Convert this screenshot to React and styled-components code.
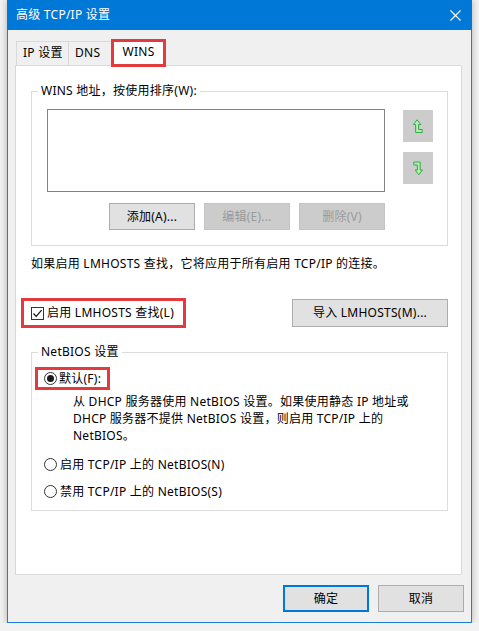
import React from "react";
import styled, { createGlobalStyle } from "styled-components";

const GlobalStyle = createGlobalStyle`
  html, body { margin: 0; padding: 0; background: #f2f2f2; }
  body {
    font-family: "Noto Sans", "Noto Sans CJK SC", sans-serif;
    font-size: 12px;
    letter-spacing: 0.25px;
    color: #000;
  }
  * { box-sizing: border-box; }
`;

const Window = styled.div`
  margin-left: 7px;
  width: 465px;
  border: 1px solid #1a7fd6;
  border-top: none;
  background: #f0f0f0;
  box-shadow: 0 0 7px rgba(0, 0, 0, 0.28);
`;

const TitleBar = styled.div`
  height: 30px;
  margin: 0 -1px;
  background: #0078d7;
  color: #fff;
  display: flex;
  align-items: center;
  justify-content: space-between;
  padding: 0 11px 0 9px;
  line-height: 16px;
`;

const Body = styled.div`
  padding: 0 7px 10px 7px;
`;

const TabRow = styled.div`
  display: flex;
  align-items: flex-end;
  height: 26px;
  margin-top: 9px;
  padding-left: 1px;
  position: relative;
  z-index: 1;
`;

const Tab = styled.div`
  width: ${(p) => p.$w}px;
  height: 24px;
  margin-left: ${(p) => (p.$first ? 0 : -1)}px;
  border: 1px solid #d9d9d9;
  border-bottom: none;
  background: #f0f0f0;
  padding-left: 6px;
  line-height: 22px;
  white-space: nowrap;
`;

const ActiveTab = styled.div`
  width: 55px;
  height: 28px;
  margin-left: -3px;
  margin-bottom: -2px;
  border: 3px solid #e33a3e;
  background: #fff;
  text-align: center;
  line-height: 20px;
  padding-bottom: 2px;
`;

const Panel = styled.div`
  height: 510px;
  margin-right: 2px;
  border: 1px solid #d9d9d9;
  background: #fff;
  padding: 0 13px 0 15px;
  overflow: hidden;
`;

const Group = styled.fieldset`
  margin: ${(p) => p.$top}px 0 0 0;
  padding: 0;
  min-width: 0;
  border: 1px solid #dcdcdc;
`;

const Legend = styled.legend`
  margin-left: 6px;
  padding: 0 3px;
  line-height: 16px;
`;

const GroupBody = styled.div`
  padding: ${(p) => p.$pad};
`;

const ListRow = styled.div`
  display: flex;
  gap: 18px;
`;

const ListBox = styled.div`
  width: 338px;
  height: 83px;
  border: 1px solid #828282;
  background: #fff;
`;

const ArrowCol = styled.div`
  display: flex;
  flex-direction: column;
  gap: 10px;
  padding-top: 1px;
`;

const ArrowButton = styled.div`
  width: 30px;
  height: 32px;
  background: #cccccc;
  display: flex;
  align-items: center;
  justify-content: center;
`;

const ButtonRow = styled.div`
  width: 338px;
  display: flex;
  justify-content: flex-end;
  gap: 9px;
  margin-top: 11px;
`;

const Button = styled.button`
  width: ${(p) => p.$w || 86}px;
  height: ${(p) => p.$h || 27}px;
  font: inherit;
  letter-spacing: inherit;
  line-height: 16px;
  padding: 0;
  color: ${(p) => (p.disabled ? "#9a9a9a" : "#000")};
  background: ${(p) => (p.disabled ? "#cccccc" : "#e1e1e1")};
  border: ${(p) =>
    p.$primary ? "2px solid #0078d7" : p.disabled ? "1px solid #c4c4c4" : "1px solid #adadad"};
  cursor: default;
`;

const InfoText = styled.div`
  margin-top: 10px;
  line-height: 16px;
  white-space: nowrap;
`;

const CheckRow = styled.div`
  display: flex;
  align-items: center;
  justify-content: space-between;
  margin: 26px 0 0 -10px;
  height: 30px;
`;

const Highlight = styled.div`
  display: inline-flex;
  align-items: center;
  gap: ${(p) => p.$gap}px;
  height: ${(p) => p.$h}px;
  border: 3px solid #e33a3e;
  padding: 0 ${(p) => p.$pr}px 0 ${(p) => p.$pl}px;
  margin-left: ${(p) => p.$ml || 0}px;
  margin-top: ${(p) => p.$mt || 0}px;
  line-height: 16px;
  white-space: nowrap;
`;

const CheckBox = styled.span`
  width: 13px;
  height: 13px;
  border: 1px solid #333;
  background: #fff;
  display: inline-flex;
  align-items: center;
  justify-content: center;
`;

const RadioCircle = styled.span`
  width: 13px;
  height: 13px;
  border-radius: 50%;
  border: 1px solid #333;
  background: #fff;
  display: inline-flex;
  align-items: center;
  justify-content: center;
  flex: none;
  &::after {
    content: "";
    width: 7px;
    height: 7px;
    border-radius: 50%;
    background: ${(p) => (p.$checked ? "#1a1a1a" : "transparent")};
  }
`;

const RadioRow = styled.div`
  display: flex;
  align-items: center;
  gap: 3px;
  height: 17px;
  margin-top: ${(p) => p.$mt}px;
  line-height: 16px;
  white-space: nowrap;
`;

const Description = styled.div`
  margin: 3px 0 0 29px;
  line-height: 17px;
  white-space: nowrap;
`;

const Footer = styled.div`
  display: flex;
  justify-content: flex-end;
  gap: 9px;
  margin-top: 10px;
`;

const CloseIcon = () => (
  <svg width="11" height="11" viewBox="0 0 11 11">
    <path d="M0.5 0.5 L10.5 10.5 M10.5 0.5 L0.5 10.5" stroke="#fff" strokeWidth="1.1" />
  </svg>
);

const UpIcon = () => (
  <svg width="10" height="15" viewBox="0 0 10 15">
    <polygon
      points="4,0.8 7.8,5.5 5.6,5.5 5.6,10.5 9.2,10.5 9.2,13.5 2.6,13.5 2.6,5.5 0.4,5.5"
      fill="#b6ecae"
      stroke="#2fae4a"
      strokeWidth="1"
      strokeLinejoin="round"
    />
  </svg>
);

const DownIcon = () => (
  <svg width="10" height="15" viewBox="0 0 10 15">
    <polygon
      points="0.8,1 7.2,1 7.2,9 9.4,9 5.8,13.8 2.2,9 4.4,9 4.4,4 0.8,4"
      fill="#b6ecae"
      stroke="#2fae4a"
      strokeWidth="1"
      strokeLinejoin="round"
    />
  </svg>
);

const CheckMark = () => (
  <svg width="11" height="11" viewBox="0 0 11 11">
    <path d="M1.5 5.5 L4.2 8.3 L9.6 2.2" fill="none" stroke="#111" strokeWidth="1.2" />
  </svg>
);

export default function App() {
  return (
    <>
      <GlobalStyle />
      <Window>
        <TitleBar>
          <span>高级 TCP/IP 设置</span>
          <CloseIcon />
        </TitleBar>
        <Body>
          <TabRow>
            <Tab $w={53} $first>IP 设置</Tab>
            <Tab $w={46}>DNS</Tab>
            <ActiveTab>WINS</ActiveTab>
          </TabRow>
          <Panel>
            <Group $top={17}>
              <Legend>WINS 地址，按使用排序(W):</Legend>
              <GroupBody $pad="10px 0 15px 15px">
                <ListRow>
                  <ListBox />
                  <ArrowCol>
                    <ArrowButton>
                      <UpIcon />
                    </ArrowButton>
                    <ArrowButton>
                      <DownIcon />
                    </ArrowButton>
                  </ArrowCol>
                </ListRow>
                <ButtonRow>
                  <Button>添加(A)...</Button>
                  <Button disabled>编辑(E)...</Button>
                  <Button disabled>删除(V)</Button>
                </ButtonRow>
              </GroupBody>
            </Group>
            <InfoText>如果启用 LMHOSTS 查找，它将应用于所有启用 TCP/IP 的连接。</InfoText>
            <CheckRow>
              <Highlight $h={30} $pl={7} $pr={9} $gap={3}>
                <CheckBox>
                  <CheckMark />
                </CheckBox>
                <span>启用 LMHOSTS 查找(L)</span>
              </Highlight>
              <Button $w={156} $h={28}>导入 LMHOSTS(M)...</Button>
            </CheckRow>
            <Group $top={16}>
              <Legend>NetBIOS 设置</Legend>
              <GroupBody $pad="0 0 10px 12px">
                <Highlight $h={23} $pl={6} $pr={6} $gap={2} $ml={-9} $mt={7}>
                  <RadioCircle $checked />
                  <span>默认(F):</span>
                </Highlight>
                <Description>
                  从 DHCP 服务器使用 NetBIOS 设置。如果使用静态 IP 地址或
                  <br />
                  DHCP 服务器不提供 NetBIOS 设置，则启用 TCP/IP 上的
                  <br />
                  NetBIOS。
                </Description>
                <RadioRow $mt={12}>
                  <RadioCircle />
                  <span>启用 TCP/IP 上的 NetBIOS(N)</span>
                </RadioRow>
                <RadioRow $mt={10}>
                  <RadioCircle />
                  <span>禁用 TCP/IP 上的 NetBIOS(S)</span>
                </RadioRow>
              </GroupBody>
            </Group>
          </Panel>
          <Footer>
            <Button $primary>确定</Button>
            <Button>取消</Button>
          </Footer>
        </Body>
      </Window>
    </>
  );
}
